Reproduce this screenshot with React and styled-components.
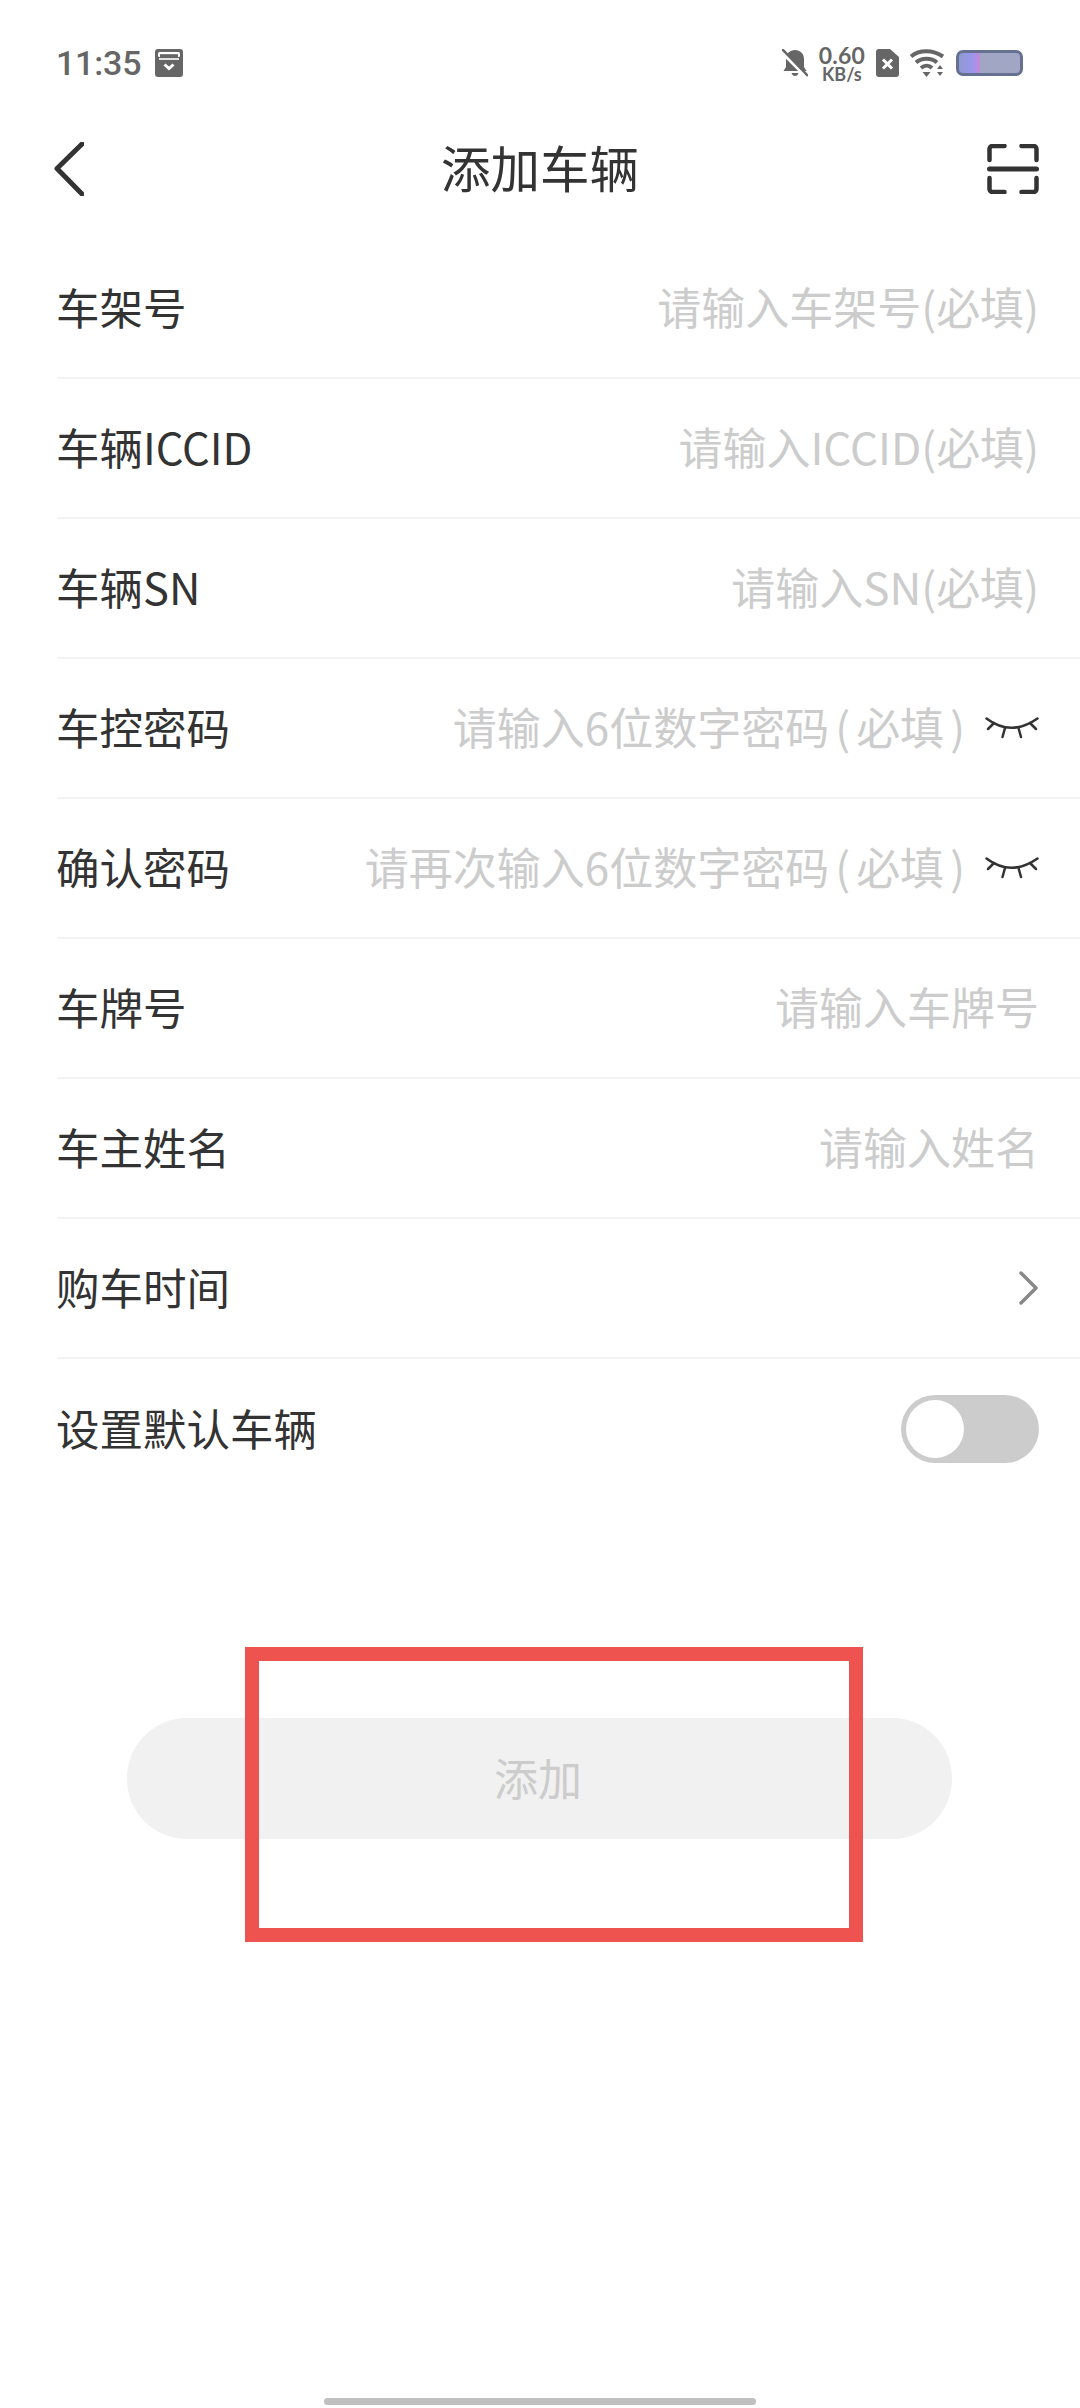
import React from "react";
import styled, { createGlobalStyle } from "styled-components";

const Global = createGlobalStyle`
  html, body { margin: 0; padding: 0; background: #fff; }
  * { box-sizing: border-box; }
`;

const Page = styled.div`
  position: relative;
  width: 1080px;
  height: 2408px;
  display: flex;
  flex-direction: column;
  overflow: hidden;
  background: #fff;
  font-family: "Noto Sans CJK SC", "Noto Sans", sans-serif;
`;

const StatusBar = styled.div`
  height: 100px;
  padding: 26px 57px 0 56px;
  display: flex;
  align-items: center;
  justify-content: space-between;
  color: #666;
`;

const StatusGroup = styled.div`
  display: flex;
  align-items: center;
  gap: ${(p) => p.$gap || 0}px;
`;

const Time = styled.span`
  font-family: Roboto, sans-serif;
  font-size: 34px;
  font-weight: 500;
  line-height: 1;
  letter-spacing: -0.2px;
`;

const Speed = styled.div`
  display: flex;
  flex-direction: column;
  align-items: center;
  font-family: Lato, sans-serif;
  font-weight: 700;
  color: #666;
`;

const SpeedValue = styled.span`
  font-size: 23px;
  letter-spacing: 0.2px;
  line-height: 22px;
`;

const SpeedUnit = styled.span`
  font-size: 18px;
  line-height: 17px;
`;

const Battery = styled.div`
  width: 67px;
  height: 26px;
  border: 3px solid #667090;
  border-radius: 7px;
  background: linear-gradient(
    90deg,
    #8f9ad0 0%,
    #9a96ee 22%,
    #c28ad8 33%,
    #a0a6c4 36%,
    #a0a6c4 100%
  );
`;

const NavBar = styled.div`
  height: 139px;
  padding: 0 41px 0 54px;
  display: grid;
  grid-template-columns: 1fr auto 1fr;
  align-items: center;
`;

const NavEnd = styled.div`
  display: flex;
  justify-content: ${(p) => (p.$right ? "flex-end" : "flex-start")};
  margin-top: -2px;
`;

const Title = styled.h1`
  margin: 0 13px 6px 0;
  font-size: 49.5px;
  font-weight: 400;
  color: #333;
  line-height: 1;
`;

const Row = styled.div`
  height: 140px;
  margin-left: 57px;
  padding-right: 41px;
  display: flex;
  align-items: center;
  justify-content: space-between;
  border-bottom: ${(p) => (p.$last ? "none" : "2px solid #f3f3f3")};
`;

const Label = styled.span`
  font-size: 43.5px;
  color: #333;
  white-space: nowrap;
  margin: 0 0 4px -1px;
`;

const Field = styled.div`
  display: flex;
  align-items: center;
  gap: 14px;
`;

const Placeholder = styled.span`
  font-size: 44px;
  color: #ccc;
  white-space: nowrap;
  margin-bottom: 4px;
`;

const Paren = styled.span`
  margin: 0 ${(p) => p.$space || 0}px;
`;

const Toggle = styled.div`
  position: relative;
  width: 138px;
  height: 68px;
  border-radius: 34px;
  background: #ccc;
`;

const Knob = styled.div`
  position: absolute;
  left: 5px;
  top: 5px;
  width: 58px;
  height: 58px;
  border-radius: 50%;
  background: #fff;
`;

const AddButton = styled.div`
  margin: 219px 0 0 127px;
  width: 825px;
  height: 121px;
  border-radius: 60px;
  background: #f1f1f1;
  color: #ccc;
  font-size: 44px;
  display: flex;
  align-items: center;
  justify-content: center;
`;

const AddLabel = styled.span`
  margin: 0 3px 4px 0;
`;

const Highlight = styled.div`
  position: absolute;
  left: 245px;
  top: 1647px;
  width: 618px;
  height: 295px;
  border: 14px solid #ef5350;
  pointer-events: none;
`;

const HomeBar = styled.div`
  margin: auto 0 3px 324px;
  width: 432px;
  height: 7px;
  border-radius: 4px;
  background: #c0c0c0;
`;

const CalendarIcon = () => (
  <svg width="28" height="28" viewBox="0 0 28 28" style={{ display: "block" }}>
    <rect x="0" y="0" width="28" height="28" rx="3" fill="#666" />
    <rect x="3" y="3" width="22" height="5" rx="1.5" fill="#fff" />
    <rect x="5" y="5.2" width="18" height="2.8" fill="#666" />
    <path d="M4 10h20" stroke="#fff" strokeWidth="1.6" />
    <path d="M9.500 15.500l4.500 4 4.500-4" fill="none" stroke="#fff" strokeWidth="3" />
  </svg>
);

const BellOff = () => (
  <svg width="26" height="28" viewBox="0 0 26 28" style={{ display: "block" }}>
    <path
      d="M13 1c5 0 9 3.500 9 9v8l2.500 4H1.500L4 18v-8C4 4.500 8 1 13 1zM9.500 24h7c-.5 2-2 3-3.500 3s-3-1-3.500-3z"
      fill="#666"
    />
    <path d="M-1 2L24 27" stroke="#fff" strokeWidth="4" />
    <path d="M0 0L26 27" stroke="#666" strokeWidth="2.500" />
  </svg>
);

const SimOff = () => (
  <svg width="23" height="28" viewBox="0 0 23 28" style={{ display: "block" }}>
    <path
      d="M3 0h11l9 8v17a3 3 0 0 1-3 3H3a3 3 0 0 1-3-3V3a3 3 0 0 1 3-3z"
      fill="#666"
    />
    <path d="M7 10.500l9 9M16 10.500l-9 9" stroke="#fff" strokeWidth="3" />
  </svg>
);

const Wifi = () => (
  <svg width="35" height="28" viewBox="0 0 35 28" style={{ display: "block" }}>
    <path d="M1 7.500C9 .5 23 .5 33 7.500" fill="none" stroke="#666" strokeWidth="4" />
    <path d="M6 13.500C12 8.500 21 8.500 27 13.500" fill="none" stroke="#666" strokeWidth="4" />
    <path d="M11 19c3.500-3 8-3 11 0" fill="none" stroke="#666" strokeWidth="4" />
    <path d="M12.500 23h8l-4 5z" fill="#666" />
    <path d="M30 16l3 4h-6zM27 23h6l-3 4z" fill="#666" />
  </svg>
);

const BackIcon = () => (
  <svg width="30" height="54" viewBox="0 0 30 54" style={{ display: "block" }}>
    <path d="M28 2L3 26.500 28 52" fill="none" stroke="#333" strokeWidth="5" strokeLinecap="round" strokeLinejoin="round" />
  </svg>
);

const ScanIcon = () => (
  <svg width="52" height="50" viewBox="0 0 52 50" style={{ display: "block" }}>
    <g fill="none" stroke="#333" strokeWidth="4.500" strokeLinecap="round" strokeLinejoin="round">
      <path d="M2.500 16V5a3 3 0 0 1 3-3h12" />
      <path d="M34.500 2h12a3 3 0 0 1 3 3v11" />
      <path d="M2.500 34v11a3 3 0 0 0 3 3h12" />
      <path d="M34.500 48h12a3 3 0 0 0 3-3V34" />
      <path d="M2.500 25h47" strokeWidth="5" />
    </g>
  </svg>
);

const EyeClosed = () => (
  <svg width="54" height="24" viewBox="0 0 54 24" style={{ display: "block" }}>
    <g fill="none" stroke="#333" strokeWidth="2.500" strokeLinecap="round">
      <path d="M1.500 2.500Q26 21 52.500 2.500" />
      <path d="M3 13l6-6" />
      <path d="M20 12l-2.500 9" />
      <path d="M33.500 12l2.500 9" />
      <path d="M51 13l-6-6" />
    </g>
  </svg>
);

const ChevronRight = () => (
  <svg width="20" height="34" viewBox="0 0 20 34" style={{ display: "block" }}>
    <path d="M2 2l15 15L2 32" fill="none" stroke="#888" strokeWidth="3.500" strokeLinecap="round" strokeLinejoin="round" />
  </svg>
);

const Required = ({ space }) => (
  <>
    <Paren $space={space}>(</Paren>必填<Paren $space={space}>)</Paren>
  </>
);

export default function App() {
  return (
    <Page>
      <Global />
      <StatusBar>
        <StatusGroup $gap={14}>
          <Time>11:35</Time>
          <CalendarIcon />
        </StatusGroup>
        <StatusGroup $gap={11}>
          <BellOff />
          <Speed>
            <SpeedValue>0.60</SpeedValue>
            <SpeedUnit>KB/s</SpeedUnit>
          </Speed>
          <SimOff />
          <Wifi />
          <Battery />
        </StatusGroup>
      </StatusBar>
      <NavBar>
        <NavEnd>
          <BackIcon />
        </NavEnd>
        <Title>添加车辆</Title>
        <NavEnd $right>
          <ScanIcon />
        </NavEnd>
      </NavBar>
      <Row>
        <Label>车架号</Label>
        <Placeholder>请输入车架号<Required /></Placeholder>
      </Row>
      <Row>
        <Label>车辆ICCID</Label>
        <Placeholder>请输入ICCID<Required /></Placeholder>
      </Row>
      <Row>
        <Label>车辆SN</Label>
        <Placeholder>请输入SN<Required /></Placeholder>
      </Row>
      <Row>
        <Label>车控密码</Label>
        <Field>
          <Placeholder>请输入6位数字密码<Required space={6} /></Placeholder>
          <EyeClosed />
        </Field>
      </Row>
      <Row>
        <Label>确认密码</Label>
        <Field>
          <Placeholder>请再次输入6位数字密码<Required space={6} /></Placeholder>
          <EyeClosed />
        </Field>
      </Row>
      <Row>
        <Label>车牌号</Label>
        <Placeholder>请输入车牌号</Placeholder>
      </Row>
      <Row>
        <Label>车主姓名</Label>
        <Placeholder>请输入姓名</Placeholder>
      </Row>
      <Row>
        <Label>购车时间</Label>
        <ChevronRight />
      </Row>
      <Row $last>
        <Label>设置默认车辆</Label>
        <Toggle>
          <Knob />
        </Toggle>
      </Row>
      <AddButton>
        <AddLabel>添加</AddLabel>
      </AddButton>
      <HomeBar />
      <Highlight />
    </Page>
  );
}
